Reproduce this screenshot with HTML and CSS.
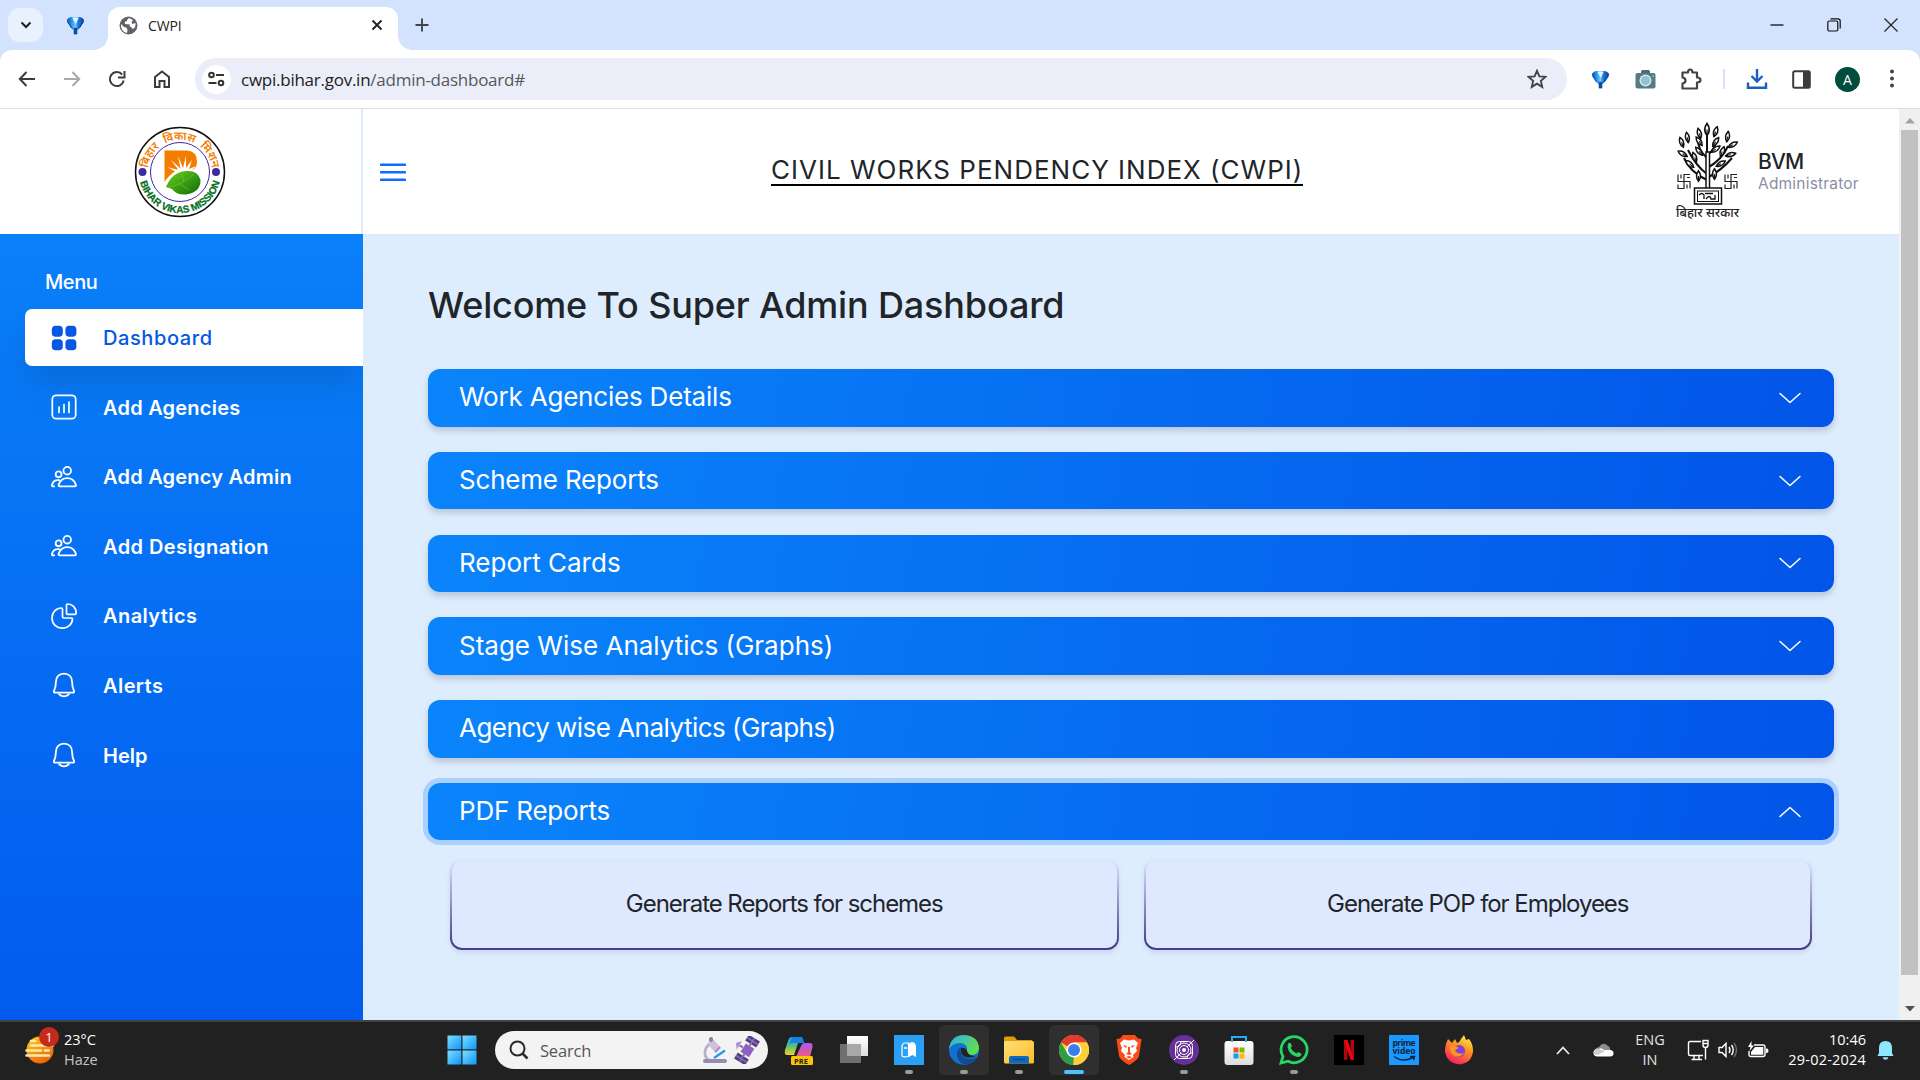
FILE: index.html
```html
<!DOCTYPE html>
<html lang="en">
<head>
<meta charset="utf-8">
<title>CWPI</title>
<link rel="stylesheet" href="styles.css">
</head>
<body>
<svg class="defs" width="0" height="0" aria-hidden="true">
  <defs>
    <linearGradient id="gem" x1="0" x2="1"><stop offset="0" stop-color="#0a4da8"/><stop offset=".3" stop-color="#2a9df4"/><stop offset=".5" stop-color="#7cc8fb"/><stop offset=".65" stop-color="#1c7be0"/><stop offset="1" stop-color="#0b3f96"/></linearGradient>
    <linearGradient id="win" x1="0" y1="0" x2="1" y2="1"><stop offset="0" stop-color="#7fe0ff"/><stop offset="1" stop-color="#0a94fb"/></linearGradient>
    <linearGradient id="sun" x1="0" y1="0" x2=".6" y2="1"><stop offset="0" stop-color="#ffd21a"/><stop offset="1" stop-color="#e8640c"/></linearGradient>
    <linearGradient id="leaf" x1="0" y1="0" x2="1" y2="1"><stop offset="0" stop-color="#6fd41a"/><stop offset="1" stop-color="#0b6a0b"/></linearGradient>
    <linearGradient id="cop1" x1="0" y1="0" x2="0" y2="1"><stop offset="0" stop-color="#18a5ee"/><stop offset=".5" stop-color="#5ac07a"/><stop offset="1" stop-color="#f3d21d"/></linearGradient>
    <linearGradient id="cop2" x1="0" y1="0" x2="0" y2="1"><stop offset="0" stop-color="#a35bf0"/><stop offset="1" stop-color="#f75a7d"/></linearGradient>
    <linearGradient id="edge1" x1="0" y1="0" x2="1" y2=".5"><stop offset="0" stop-color="#2bb0f0"/><stop offset="1" stop-color="#62dc50"/></linearGradient>
    <linearGradient id="fold" x1="0" y1="0" x2="1" y2="1"><stop offset="0" stop-color="#ffe07a"/><stop offset="1" stop-color="#fdbb24"/></linearGradient>
    <linearGradient id="fox" x1=".8" y1="0" x2=".3" y2="1"><stop offset="0" stop-color="#fff24a"/><stop offset=".45" stop-color="#ff8a1f"/><stop offset="1" stop-color="#f5186a"/></linearGradient>
    <linearGradient id="paper" x1="0" y1="0" x2="0" y2="1"><stop offset="0" stop-color="#fff"/><stop offset="1" stop-color="#dcdcdc"/></linearGradient>
    <symbol id="gemIcon" viewBox="0 0 20 20"><path d="M1 4.500 Q3 1.500 5.500 1.500 H14.500 Q17 1.500 19 4.500 L18.500 7.500 L11.800 15.500 V19.800 H8.200 V15.500 L1.500 7.500Z" fill="url(#gem)"/><path d="M6.500 2 H13.500 L10.300 9Z" fill="#e2f4ff"/><path d="M1 5L8.200 15.500L4.500 12Z M19 5L11.800 15.500L15.500 12Z" fill="#083b8c"/><path d="M8.200 13H11.800V19.800H8.200Z" fill="#0f4c9e"/></symbol>
    <symbol id="people" viewBox="0 0 24 24"><g fill="none" stroke="currentColor" stroke-width="1.700" stroke-linecap="round" stroke-linejoin="round"><circle cx="15" cy="6.200" r="3.500"/><circle cx="7" cy="9.500" r="2.700"/><path d="M8.200 20.600 H21.800 Q23.500 20.600 22.800 18.700 C21.500 15 18.500 13 15 13 C11.500 13 8.500 15 7.200 18.700 Q6.500 20.600 8.200 20.600Z"/><path d="M3 20.600 H1.800 Q.700 20.600 1 19.200 C1.800 16 4.200 14.500 7.500 14.900"/></g></symbol>
    <symbol id="bell" viewBox="0 0 24 24"><g fill="none" stroke="currentColor" stroke-width="1.700" stroke-linecap="round" stroke-linejoin="round"><path d="M4.500 9.500 C4.500 4.500 7.500 1.500 12 1.500 C16.500 1.500 19.500 4.500 19.500 9.500 C19.500 13 20 15 21.200 17.300 Q21.800 19 20 19 H4 Q2.200 19 2.800 17.300 C4 15 4.500 13 4.500 9.500Z"/><path d="M7.500 20.500 Q12 24.500 16.500 20.500"/></g></symbol>
    <symbol id="chev" viewBox="0 0 24 24"><path d="M2 7.500 L12 16.500 L22 7.500" fill="none" stroke="#fff" stroke-width="1.600" stroke-linecap="round" stroke-linejoin="round"/></symbol>
    <symbol id="twig" viewBox="0 0 8 14"><path d="M4 13 Q-.5 7 4 1 Q8.500 7 4 13Z" fill="#fff" stroke="#111" stroke-width="1.700"/><path d="M4 13V7" stroke="#111" stroke-width="1.200"/></symbol>
    <symbol id="meander" viewBox="0 0 14 16"><path d="M1 1 V8 H13 V15 M13 1 H7 V15 H1 V11 M4 1 V5 M10 11 V15 M10 4 H13" fill="none" stroke="#222" stroke-width="1.200"/></symbol>
  </defs>
</svg>

<div class="tabstrip">
  <div class="tab-search"><svg width="12" height="12" viewBox="0 0 12 12"><path d="M1.500 3.500 L6 8 L10.500 3.500" fill="none" stroke="#1f1f1f" stroke-width="2"/></svg></div>
  <svg class="pinned" width="19" height="20"><use href="#gemIcon"/></svg>
  <div class="tab">
    <svg width="19" height="19" viewBox="0 0 19 19"><circle cx="9.500" cy="9.500" r="9" fill="#5f6368"/><path d="M2 8 L5 11 Q8 11 8.500 14 L8 17 Q3 16 2 11Z M10 2 Q8 3 8 5 Q5 5 6 8 L11 8.500 Q10 11 12 11 L14 13 Q17 11 16.500 7 L13 8 Q12 6 14 4Z" fill="#fff"/></svg>
    <span class="tab-title">CWPI</span>
    <svg class="tab-close" width="12" height="12" viewBox="0 0 12 12"><path d="M1.500 1.500 L10.500 10.500 M10.500 1.500 L1.500 10.500" stroke="#222" stroke-width="1.900"/></svg>
  </div>
  <svg class="newtab" width="14" height="14" viewBox="0 0 14 14"><path d="M7 .5V13.500M.5 7H13.500" stroke="#444" stroke-width="1.900"/></svg>
  <div class="winctl">
    <svg width="14" height="14" viewBox="0 0 14 14"><path d="M.5 7H13.500" stroke="#000" stroke-width="1.200"/></svg>
    <svg width="14" height="14" viewBox="0 0 14 14"><rect x=".8" y="3" width="10" height="10" rx="1.500" fill="none" stroke="#111" stroke-width="1.200"/><path d="M3.500 .8 H11 Q13.200 .8 13.200 3 V10.500" fill="none" stroke="#111" stroke-width="1.200"/></svg>
    <svg width="14" height="14" viewBox="0 0 14 14"><path d="M.5 .5 L13.500 13.500 M13.500 .5 L.5 13.500" stroke="#222" stroke-width="1.200"/></svg>
  </div>
</div>

<div class="toolbar">
  <div class="nav">
    <svg width="18" height="18" viewBox="0 0 18 18"><path d="M17 9H2M8.500 2L1.800 9L8.500 16" fill="none" stroke="#3c3c3c" stroke-width="2"/></svg>
    <svg width="18" height="18" viewBox="0 0 18 18"><path d="M1 9H16M9.500 2L16.200 9L9.500 16" fill="none" stroke="#a9a9a9" stroke-width="2"/></svg>
    <svg width="18" height="18" viewBox="0 0 18 18"><path d="M15.700 10.500 A7 7 0 1 1 14.200 4.500" fill="none" stroke="#3c3c3c" stroke-width="2"/><path d="M16.500 1V7.500H10" fill="none" stroke="#3c3c3c" stroke-width="2"/></svg>
    <svg width="18" height="18" viewBox="0 0 18 18"><path d="M2 7 L9 1.500 L16 7 V17 H11.500 V11 H6.500 V17 H2Z" fill="none" stroke="#3c3c3c" stroke-width="2"/></svg>
  </div>
  <div class="omnibox">
    <div class="site"><svg width="17" height="16" viewBox="0 0 17 16"><g fill="none" stroke="#333" stroke-width="2"><circle cx="3.500" cy="4" r="2.300"/><path d="M8 4H16"/><circle cx="13" cy="12" r="2.300"/><path d="M.5 12H8.500"/></g></svg></div>
    <span class="url">cwpi.bihar.gov.in<span>/admin-dashboard#</span></span>
    <svg class="star" width="20" height="20" viewBox="0 0 20 20"><path d="M10 1.800 L12.400 7.400 L18.400 7.900 L13.900 11.900 L15.200 17.900 L10 14.700 L4.800 17.900 L6.100 11.900 L1.600 7.900 L7.600 7.400Z" fill="none" stroke="#444" stroke-width="1.900"/></svg>
  </div>
  <div class="ext">
    <svg width="19" height="20"><use href="#gemIcon"/></svg>
    <svg class="e-cam" width="21" height="19" viewBox="0 0 21 19"><rect x="6" y="0" width="9" height="6" rx="1.500" fill="#4c6b76"/><rect x=".5" y="3" width="20" height="15.500" rx="2" fill="#557a86"/><circle cx="10.500" cy="10.500" r="6" fill="#d5e6e9"/><circle cx="10.500" cy="10.500" r="4.500" fill="#92c2cc"/><circle cx="18" cy="6" r="1" fill="#3dddb4"/></svg>
    <svg class="e-puz" width="22" height="22" viewBox="0 0 22 22"><path d="M2.500 4.500 H8 Q8 1.500 10.200 1.500 Q12.400 1.500 12.400 4.500 H17 V9.500 Q20.500 9.500 20.500 12 Q20.500 14.500 17 14.500 V20.500 H2.500 V15.500 Q5.500 15 5.500 12.500 Q5.500 10 2.500 9.500Z" fill="none" stroke="#444" stroke-width="2.200" stroke-linejoin="round"/></svg>
    <i class="sep"></i>
    <svg class="e-dl" width="22" height="22" viewBox="0 0 22 22"><path d="M11 1V13M5.500 8L11 13.500L16.500 8M2 14.500V19.800H20V14.500" fill="none" stroke="#1a5fc4" stroke-width="2.400"/></svg>
    <svg class="e-panel" width="19" height="19" viewBox="0 0 19 19"><rect x="1.200" y="1.200" width="16.600" height="16.600" rx="1.500" fill="none" stroke="#3c3c3c" stroke-width="2"/><rect x="11" y="1" width="7" height="17" fill="#3c3c3c"/></svg>
    <span class="avatar">A</span>
    <svg class="e-dots" width="6" height="20" viewBox="0 0 6 20"><g fill="#444"><circle cx="3" cy="2.500" r="2"/><circle cx="3" cy="9.500" r="2"/><circle cx="3" cy="16.500" r="2"/></g></svg>
  </div>
</div>

<div class="page">
  <aside class="side">
    <div class="brand">
      <svg width="92" height="92" viewBox="0 0 92 92">
        <defs><path id="arcTop" d="M18 62 A32.200 32.200 0 1 1 74 62"/><path id="arcBot" d="M5 46 A41 41 0 0 0 87 46"/></defs>
        <circle cx="46" cy="46" r="44.500" fill="#fff" stroke="#111" stroke-width="1.500"/>
        <circle cx="46" cy="46" r="29.500" fill="#fff" stroke="#3c2aa0" stroke-width="1"/>
        <text class="logo-hi"><textPath href="#arcTop" startOffset="50%" text-anchor="middle">बिहार विकास मिशन</textPath></text>
        <text class="logo-en"><textPath href="#arcBot" startOffset="50%" text-anchor="middle">BIHAR VIKAS MISSION</textPath></text>
        <circle cx="8.500" cy="46" r="4" fill="#3c2aa0"/><circle cx="82" cy="46" r="4" fill="#3c2aa0"/>
        <path d="M30.500 24.500 H53 Q63 25 63 36 Q63 42 58 44 L44 43 Q34 50 30.500 56Z" fill="#f27d00"/>
        <path d="M48 49 L33 41 L44.500 44 L37 34 L46.500 42.500 L44 30 L49 42 L52 30 L52 42 L58 34 L55 43 L62 40 L56 46Z" fill="#fff"/>
        <path d="M32 61 Q38 46 52 45 Q64 44 66.500 54 Q67 66 52 68.500 Q42 69 38 63Z" fill="url(#leaf)"/>
        <path d="M34 61 Q46 60 60 48 M46 58 L55 64 M50 55 L48 48" fill="none" stroke="#7cc832" stroke-width=".6"/>
      </svg>
    </div>
    <nav class="menu">
      <div class="menu-title">Menu</div>
      <a class="item active"><svg width="26" height="26" viewBox="0 0 26 26" fill="#0657e6"><rect x=".8" y=".8" width="11" height="11" rx="3.800"/><rect x="14.400" y=".8" width="11" height="11" rx="3.800"/><rect x=".8" y="14.300" width="11" height="11" rx="3.800"/><rect x="14.400" y="14.300" width="11" height="11" rx="3.800"/></svg><span class="w-dash">Dashboard</span></a>
      <a class="item"><svg width="26" height="26" viewBox="0 0 26 26"><rect x="1.300" y="1.300" width="23.400" height="23.400" rx="4" fill="none" stroke="#fff" stroke-width="1.700"/><path d="M8 13V18.500M13 10.500V18.500M18 8V18.500" stroke="#fff" stroke-width="1.700" stroke-linecap="round"/></svg><span class="w-mid">Add Agencies</span></a>
      <a class="item"><svg width="26" height="26"><use href="#people"/></svg><span class="w-mid">Add Agency Admin</span></a>
      <a class="item"><svg width="26" height="26"><use href="#people"/></svg><span class="w-wide">Add Designation</span></a>
      <a class="item"><svg width="26" height="26" viewBox="0 0 26 26"><g fill="none" stroke="#fff" stroke-width="1.700" stroke-linejoin="round"><path d="M10.500 5 C5 5 1 9.500 1 15 C1 21 5.500 25.200 11.500 25.200 C17 25.200 21.500 21 21.500 15.800 Q21.500 15 20.500 15 H13 Q11.500 15 11.500 13.500 V6 Q11.500 5 10.500 5Z"/><path d="M15.500 2.200 Q15.500 1 16.700 1 C21.500 1 25.200 5 25.200 10 Q25.200 11.300 24 11.300 H16.500 Q15.500 11.300 15.500 10.200Z"/></g></svg><span class="w-wide">Analytics</span></a>
      <a class="item"><svg width="26" height="26"><use href="#bell"/></svg><span class="w-wide">Alerts</span></a>
      <a class="item"><svg width="26" height="26"><use href="#bell"/></svg><span>Help</span></a>
    </nav>
  </aside>

  <div class="content">
    <header class="header">
      <svg class="burger" width="26" height="19" viewBox="0 0 26 19"><path d="M1 1.800H25M1 9.300H25M1 16.800H25" stroke="#0d6efd" stroke-width="2.500" stroke-linecap="round"/></svg>
      <h1><span>CIVIL WORKS PENDENCY INDEX (CWPI)</span></h1>
      <div class="user">
        <svg class="emblem" width="66" height="98" viewBox="0 0 66 98">
          <path d="M31 66 V10 M31 52 Q20 44 12 28 M31 46 Q46 38 52 24 M31 58 Q14 50 8 36 M31 56 Q46 48 56 36 M31 36 Q22 28 22 18 M31 34 Q40 26 41 16" fill="none" stroke="#111" stroke-width="2"/>
          <path d="M30 66V30H33.500V66" fill="#fff" stroke="#111" stroke-width="1.500"/>
          <g>
            <use href="#twig" x="27" y="0" width="8" height="15"/>
            <use href="#twig" x="20" y="5" width="7" height="13" transform="rotate(-15 23 12)"/><use href="#twig" x="36" y="3" width="7" height="13" transform="rotate(18 39 10)"/>
            <use href="#twig" x="20" y="13" width="7" height="13" transform="rotate(-35 23 20)"/><use href="#twig" x="36" y="13" width="7" height="13" transform="rotate(35 39 20)"/>
            <use href="#twig" x="8" y="9" width="7" height="13" transform="rotate(-10 11 16)"/><use href="#twig" x="48" y="8" width="7" height="13" transform="rotate(8 51 15)"/>
            <use href="#twig" x="2" y="14" width="7" height="13" transform="rotate(-20 5 20)"/><use href="#twig" x="54" y="16" width="7" height="13" transform="rotate(60 57 22)"/>
            <use href="#twig" x="3" y="26" width="7" height="13" transform="rotate(-60 6 32)"/><use href="#twig" x="52" y="26" width="7" height="13" transform="rotate(75 55 32)"/>
            <use href="#twig" x="15" y="29" width="7" height="13" transform="rotate(-20 18 35)"/><use href="#twig" x="43" y="23" width="7" height="13" transform="rotate(20 46 29)"/>
            <use href="#twig" x="20" y="23" width="7" height="13" transform="rotate(-40 23 30)"/><use href="#twig" x="36" y="20" width="7" height="13" transform="rotate(55 39 27)"/>
            <use href="#twig" x="10" y="36" width="7" height="13" transform="rotate(-50 13 42)"/><use href="#twig" x="42" y="35" width="7" height="13" transform="rotate(60 45 41)"/>
            <use href="#twig" x="19" y="47" width="7" height="14"/><use href="#twig" x="35" y="45" width="7" height="14"/>
          </g>
          <use href="#meander" x="1" y="51" width="14" height="17"/><use href="#meander" x="48" y="51" width="14" height="17"/>
          <rect x="18.500" y="66" width="27" height="16" fill="#fff" stroke="#111" stroke-width="1.500"/><rect x="21.500" y="69" width="21" height="10.500" fill="none" stroke="#111"/><path d="M23 73 Q26 70 28 73 V77 M29 71.500H37M30 77Q34 72 35 77H39V73" fill="none" stroke="#111" stroke-width="1.300"/>
          <text class="emblem-text" x="0" y="95" textLength="63" lengthAdjust="spacingAndGlyphs">बिहार सरकार</text>
        </svg>
        <div class="who"><b>BVM</b><span>Administrator</span></div>
      </div>
    </header>
    <main class="main">
      <h2>Welcome To Super Admin Dashboard</h2>
      <div class="acc"><span class="t-tight">Work Agencies Details</span><svg width="24" height="24"><use href="#chev"/></svg></div>
      <div class="acc"><span class="t-tight">Scheme Reports</span><svg width="24" height="24"><use href="#chev"/></svg></div>
      <div class="acc"><span>Report Cards</span><svg width="24" height="24"><use href="#chev"/></svg></div>
      <div class="acc"><span>Stage Wise Analytics (Graphs)</span><svg width="24" height="24"><use href="#chev"/></svg></div>
      <div class="acc"><span class="t-tighter">Agency wise Analytics (Graphs)</span></div>
      <div class="acc open"><span class="t-tight">PDF Reports</span><svg width="24" height="24"><use href="#chev"/></svg></div>
      <div class="cards">
        <div class="card"><span>Generate Reports for schemes</span></div>
        <div class="card"><span>Generate POP for Employees</span></div>
      </div>
    </main>
  </div>

  <div class="scroll">
    <svg width="10" height="6" viewBox="0 0 10 6"><path d="M5 0L10 5.500H0Z" fill="#a3a3a3"/></svg>
    <div class="thumb"></div>
    <svg width="10" height="6" viewBox="0 0 10 6"><path d="M5 5.500L10 0H0Z" fill="#505050"/></svg>
  </div>
</div>

<div class="taskbar">
  <div class="weather">
    <div class="sun"><svg width="34" height="30" viewBox="0 0 34 30"><circle cx="15" cy="15" r="13.500" fill="url(#sun)"/><g stroke="#ffe9a8" stroke-width="2.600" stroke-linecap="round"><path d="M6 6H10M6 10.500H28M1.500 15.500H16M20 15.500H24M1.500 20.500H24"/></g></svg><span class="badge">1</span></div>
    <div class="wtext"><span>23°C</span><span>Haze</span></div>
  </div>
  <div class="slot"><svg width="30" height="30" viewBox="0 0 30 30" fill="url(#win)"><path d="M.5 .5H14.300V14.300H.5Z"/><path d="M15.500 .5H29.500V14.300H15.500Z"/><path d="M.5 15.500H14.300V29.500H.5Z"/><path d="M15.500 15.500H29.500V29.500H15.500Z"/></svg></div>
  <div class="search">
    <svg width="20" height="20" viewBox="0 0 20 20"><circle cx="8.500" cy="8.500" r="7" fill="none" stroke="#2a2a2a" stroke-width="2"/><path d="M13.500 13.500L18.500 18.500" stroke="#2a2a2a" stroke-width="2.500"/></svg>
    <span>Search</span>
    <svg class="scope" width="26" height="28" viewBox="0 0 26 28"><path d="M8 8 Q3 11 3 17 Q3 22 7 24" fill="none" stroke="#b9afc8" stroke-width="2.800"/><path d="M6 6L12 4L19 12L14 17L9 12Z" fill="#d0c2de"/><path d="M13 16L18 11" stroke="#a98bd0" stroke-width="2"/><rect x="7" y="1" width="4" height="5" rx="2" fill="#8a8590"/><path d="M12 22L23 14.500" stroke="#1c9cf0" stroke-width="2.200"/><rect x="1" y="23" width="24" height="4" rx="2" fill="#9b8ab0"/></svg>
    <svg width="26" height="28" viewBox="0 0 26 28"><g transform="rotate(32 13 14)"><rect x="6.500" y="0" width="13" height="7" fill="#54436f"/><rect x="6.500" y="21" width="13" height="7" fill="#54436f"/><rect x="8.500" y="9" width="10" height="10" fill="#8d62c4"/><path d="M13 7V9M13 19V21M8 14H4" stroke="#777" stroke-width="2"/><path d="M4 9V19L0 14Z" fill="#a98be0"/><path d="M6.500 3.500H19.500M6.500 24.500H19.500M13 0V7M13 21V28" stroke="#8f68d8" stroke-width="1.500"/></g></svg>
  </div>
  <div class="apps">
    <div class="slot"><svg width="30" height="30" viewBox="0 0 30 30"><path d="M8 2H18L20 8H14L10 20H3Q0 20 1 15L4 6Q5 2 8 2Z" fill="url(#cop1)"/><path d="M8 2H18L20 8H8Q6 8 5 10Z" fill="#1482e6"/><path d="M20 8H26Q29 8 28.500 12L26 22H12L17 11Q18 8 20 8Z" fill="url(#cop2)"/><rect x="7" y="21" width="22" height="9" rx="1.500" fill="#ffc400"/><text class="pre" x="10" y="28.500">PRE</text></svg></div>
    <div class="slot"><svg width="30" height="30" viewBox="0 0 30 30"><rect x="1" y="9" width="21" height="19" fill="#707070"/><rect x="8" y="1" width="21" height="20" fill="url(#paper)"/><rect x="8" y="9" width="14" height="12" fill="#a8a8a8"/></svg></div>
    <div class="slot run"><svg width="30" height="30" viewBox="0 0 30 30"><rect width="30" height="30" fill="#2b9ff3"/><path d="M8 21V12Q8 8 11.500 8H14.500V21.500Q10 22.500 8 21Z" fill="none" stroke="#fff" stroke-width="1.200"/><path d="M10 13H13" stroke="#fff" stroke-width="1.500"/><path d="M14.500 22V10Q15.500 7 18.500 7Q22 8 22 12V22L18.500 20Z" fill="#fff"/></svg></div>
    <div class="slot run lit"><svg width="30" height="30" viewBox="0 0 30 30"><circle cx="15" cy="15" r="15" fill="#0f72cf"/><path d="M0 14Q2 0 15 0Q30 1 30 14Q29 20 22 20Q17 20 18 16Q19 9 12 8Q4 7 0 14Z" fill="url(#edge1)"/><path d="M28 22Q20 26 15 22Q10 18 12 12Q7 15 8 21Q10 29 17 30Q24 30 28 22Z" fill="#124a94"/><path d="M18 16Q16 12 12 13Q11 18 15 21Q19 24 27 21Q19 21 18 16Z" fill="#222"/></svg></div>
    <div class="slot run"><svg width="30" height="28" viewBox="0 0 30 28"><path d="M0 2Q0 .5 1.500 .5H10L13 4H28V10H0Z" fill="#dd9d05"/><rect y="5" width="30" height="22.500" rx="1.500" fill="url(#fold)"/><path d="M5 27.500V22Q5 20 7 20H23Q25 20 25 22V27.500Z" fill="#0e6bc0"/><path d="M9 23.500H21" stroke="#064a8c" stroke-width="1.500"/></svg></div>
    <div class="slot run lit current"><svg width="30" height="30" viewBox="0 0 30 30"><circle cx="15" cy="15" r="15" fill="#fdd03b"/><path d="M15 15L2 7.500A15 15 0 0 1 28 7.500H15Z" fill="#e33b2e"/><path d="M2 7.500L8.500 18.750L15 22.500L14 30A15 15 0 0 1 2 7.500Z" fill="#2d9d48"/><path d="M21.500 18.750L14 30A15 15 0 0 0 28 7.500H15Z" fill="#fdd03b"/><circle cx="15" cy="15" r="7.500" fill="#fff"/><circle cx="15" cy="15" r="6" fill="#3b7ded"/></svg></div>
    <div class="slot"><svg width="26" height="30" viewBox="0 0 26 30"><path d="M7 0H19L22 3.500L25.500 4L25 8L23 21Q22 25 13 30Q4 25 3 21L1 8L.500 4L4 3.500Z" fill="#fb4a16"/><path d="M8 4.500L13 5.500L18 4.500L22 8L20 13L21 16L17 20L17.500 22L13 25L8.500 22L9 20L5 16L6 13L4 8Z" fill="#fff"/><path d="M7 10L11 11L10 13ZM19 10L15 11L16 13ZM12 12V17L10 19L13 20L16 19L14 17V12ZM10 22L13 21L16 22L13 23.500Z" fill="#fb4a16"/></svg></div>
    <div class="slot run"><svg width="30" height="30" viewBox="0 0 30 30"><circle cx="15" cy="15" r="15" fill="#663096"/><g fill="none" stroke="#fff" stroke-width="1"><rect x="6.500" y="6.500" width="17" height="17" rx="4"/><circle cx="15" cy="15" r="7"/><circle cx="15" cy="15" r="4.500"/><path d="M5 25L12 18M18 12L25 5M6.500 12Q12 12 12 6.500M23.500 18Q18 18 18 23.500"/></g><circle cx="15" cy="15" r="2" fill="#fff"/></svg></div>
    <div class="slot"><svg width="30" height="30" viewBox="0 0 30 30"><rect x=".5" y="6" width="29" height="24" rx="3" fill="url(#paper)"/><path d="M8 7V2H22V7" fill="none" stroke="#27aef2" stroke-width="2"/><path d="M9.500 12.500H14.500V17.500H9.500Z" fill="#f25022"/><path d="M15.500 12.500H20.500V17.500H15.500Z" fill="#7fba00"/><path d="M9.500 18.500H14.500V23.500H9.500Z" fill="#00a4ef"/><path d="M15.500 18.500H20.500V23.500H15.500Z" fill="#ffb900"/></svg></div>
    <div class="slot run"><svg width="30" height="30" viewBox="0 0 30 30"><path d="M2 28L4 21.500A13 13 0 1 1 9 26.200Z" fill="#202020" stroke="#27d466" stroke-width="2.800"/><path d="M9 9Q10 7 11.500 8L13 11L11.800 13Q13.500 17 17.500 18.500L19 17L22.500 18.800Q22 22 18.500 22Q10 20 8.500 12Z" fill="#27d466"/></svg></div>
    <div class="slot"><svg width="30" height="30" viewBox="0 0 30 30"><rect width="30" height="30" fill="#000"/><path d="M10 5H13.500V24.500L10 25ZM16.500 5H20V25L16.500 24.500Z" fill="#b1060f"/><path d="M10 5H13.500L20 25L16.500 24.500Z" fill="#e50914"/></svg></div>
    <div class="slot"><svg width="30" height="30" viewBox="0 0 30 30"><rect width="30" height="30" fill="#1a98ff"/><text class="prime" x="3.500" y="10.500" textLength="23">prime</text><text class="prime" x="3.500" y="19" textLength="23">video</text><path d="M5 21.500Q14 28 24 22.500M21 21.500L25.500 21.500L24.500 25" fill="none" stroke="#0b2540" stroke-width="1.500"/></svg></div>
    <div class="slot"><svg width="30" height="30" viewBox="0 0 30 30"><path d="M2 9L4 4L8 8L11 4L13 8Q16 7 17 4L20 0L22 5L25 4Q29 9 29 16Q28 28 15 29.500Q3 28 1 17Q1 12 2 9Z" fill="url(#fox)"/><circle cx="15" cy="16" r="6" fill="#8040e0"/><path d="M5 12Q10 9 15 13L11 15Q13 20 20 18Q15 24 9 20Q6 17 5 12Z" fill="#ff9426"/></svg></div>
  </div>
  <div class="tray">
    <div class="s40"><svg width="14" height="9" viewBox="0 0 14 9"><path d="M1 8L7 1.500L13 8" fill="none" stroke="#eee" stroke-width="1.700"/></svg></div>
    <div class="s40"><svg width="21" height="14" viewBox="0 0 21 14"><path d="M4 10Q1 5 6 4Q10-2 15 3Q18 4 17 9Z" fill="#8d8d8d"/><path d="M4 13.500Q0 13 .5 9Q2 5 6 6Q8 4 11 7L18 7Q21 8 20.500 11Q20 13.500 17 13.500Z" fill="#fff"/><path d="M.5 9Q2 5 6 6L12 8L5 12Q1 12 .500 9Z" fill="#ccc"/></svg></div>
    <div class="lang"><span>ENG</span><span>IN</span></div>
    <div class="s42"><svg width="22" height="22" viewBox="0 0 22 22"><g fill="none" stroke="#fff" stroke-width="1.400"><path d="M14 2.500H3Q1.500 2.500 1.500 4V15Q1.500 16.500 3 16.500H16M7 17V20M12 17V20M4.500 20.500H15M18.500 9V20.500"/><path d="M16 1.500H21V6Q21 8.500 18.500 8.500Q16 8.500 16 6ZM16 4.500H21"/></g></svg></div>
    <div class="s18"><svg width="20" height="18" viewBox="0 0 20 18"><g fill="none" stroke="#fff" stroke-width="1.400"><path d="M1 6.500H4L8 2.500V15.500L4 11.500H1Z"/><path d="M11 6Q13 9 11 12M13.500 4Q17 9 13.500 14"/><path d="M16 2Q21 9 16 16" stroke="#6d6d6d"/></g></svg></div>
    <div class="s42"><svg width="22" height="18" viewBox="0 0 22 18"><path d="M7 4H16Q18 4 18 6V13.500Q18 15.500 16 15.500H4Q2 15.500 2 13.500V10" fill="none" stroke="#fff" stroke-width="1.400"/><path d="M8 6H16.300V13.700H4V11Z M19 7.500H20Q21.500 8 21.500 9.800Q21.500 11.500 20 12H19Z M4.500 0L1 6H3.500L2.500 10L7 4.500H4.500Z" fill="#fff"/></svg></div>
    <div class="clock"><span>10:46</span><span class="date">29-02-2024</span></div>
    <div class="s38"><svg width="17" height="20" viewBox="0 0 17 20"><path d="M2 8Q2 1 8.500 1Q15 1 15 8V13L16.500 16H.5L2 13ZM5.500 17.200H11.500Q10.500 19.800 8.500 19.800Q6.500 19.800 5.500 17.200Z" fill="#8fe6ff"/></svg></div>
  </div>
</div>
</body>
</html>
```
FILE: styles.css
```css
* { box-sizing: border-box; }
body {
  margin: 0;
  width: 1920px;
  height: 1080px;
  overflow: hidden;
  display: flex;
  flex-direction: column;
  font-family: "Inter", "Noto Sans", sans-serif;
  color: #212529;
  background: #fff;
}
svg { display: block; flex: none; }
.defs { position: absolute; }

/* Browser tab strip */
.tabstrip {
  height: 50px;
  flex: none;
  background: #d3e2fd;
  display: flex;
  align-items: center;
  padding-left: 8px;
  font-family: "Open Sans", "Noto Sans", sans-serif;
}
.tab-search {
  width: 35px;
  height: 34px;
  border-radius: 12px;
  background: #e9f1fe;
  display: grid;
  place-items: center;
}
.pinned { margin: 0 23px; }
.tab {
  position: relative;
  align-self: flex-end;
  width: 290px;
  height: 43px;
  border-radius: 12px 12px 0 0;
  background: #fff;
  display: flex;
  align-items: center;
  padding: 0 15px 7px 11px;
}
.tab::before, .tab::after {
  content: "";
  position: absolute;
  bottom: 0;
  width: 14px;
  height: 14px;
}
.tab::before { left: -14px; background: radial-gradient(circle at 0 0, transparent 13.5px, #fff 14px); }
.tab::after { right: -14px; background: radial-gradient(circle at 100% 0, transparent 13.5px, #fff 14px); }
.tab-title { margin-left: 10px; font-size: 14px; letter-spacing: -.1px; color: #222; }
.tab-close { margin-left: auto; }
.newtab { margin-left: 17px; }
.winctl { margin-left: auto; margin-right: 22px; display: flex; gap: 43px; }

/* Browser toolbar */
.toolbar {
  height: 59px;
  flex: none;
  display: flex;
  align-items: center;
  padding: 0 25px 0 18px;
  border-bottom: 1px solid #dedede;
  background: #fff;
  box-shadow: 0 -12px 0 #d3e2fd;
  border-radius: 12px 12px 0 0;
  clip-path: inset(0);
  font-family: "Open Sans", "Noto Sans", sans-serif;
}
.nav { display: flex; gap: 27px; width: 177px; }
.omnibox {
  width: 1372px;
  height: 42px;
  border-radius: 21px;
  background: #ebeef8;
  display: flex;
  align-items: center;
  padding: 0 20px 0 7px;
}
.site {
  width: 29px;
  height: 29px;
  border-radius: 50%;
  background: #fff;
  display: grid;
  place-items: center;
}
.url { margin-left: 10px; font-size: 17px; letter-spacing: -.25px; color: #202124; }
.url span { color: #55585d; }
.star { margin-left: auto; }
.ext { flex: 1; display: flex; align-items: center; padding-left: 24px; }
.e-cam { margin-left: 25px; }
.e-puz { margin-left: 24px; }
.sep { width: 2px; height: 20px; margin: 0 21px; background: #d3e2fd; }
.e-panel { margin: 0 24px; }
.e-dots { margin-left: 29px; }
.avatar {
  width: 25px;
  height: 25px;
  border-radius: 50%;
  background: #004d40;
  color: #fff;
  font-size: 14px;
  display: grid;
  place-items: center;
}

/* Page */
.page { flex: 1; min-height: 0; display: flex; }
.side { width: 363px; flex: none; display: flex; flex-direction: column; }
.brand {
  height: 125px;
  flex: none;
  border-right: 2px solid #deedfe;
  padding: 17px 0 0 134px;
}
.logo-hi { font: 600 11.5px "Noto Sans Devanagari", "Noto Sans", sans-serif; fill: #f27d00; word-spacing: 3px; }
.logo-en { font: 700 10px "Liberation Sans Narrow", "Liberation Sans", sans-serif; fill: #067024; stroke: #067024; stroke-width: .25px; letter-spacing: -.1px; }
.menu {
  flex: 1;
  background: linear-gradient(180deg, #0a80f9, #025bee);
  padding: 35px 0 0 25px;
  overflow: hidden;
}
.menu-title { height: 40px; line-height: 26px; padding-left: 20px; font-size: 20px; font-weight: 500; letter-spacing: -.4px; color: #fff; }
.item {
  height: 57px;
  margin-bottom: 12.600px;
  display: flex;
  align-items: center;
  gap: 26px;
  padding-left: 26px;
  color: #fff;
  font-size: 20px;
  font-weight: 600;
}
.item:not(.active) span { padding-top: 1px; }
.item.active {
  background: #fff;
  color: #0657e6;
  font-weight: 500;
  border-radius: 7px 0 0 7px;
  box-shadow: 0 20px 30px rgba(8, 80, 160, .3);
}
.w-dash { letter-spacing: .6px; }
.w-mid { letter-spacing: .22px; }
.w-wide { letter-spacing: .42px; }
.content { flex: 1; min-width: 0; display: flex; flex-direction: column; background: #deedfe; }
.header {
  height: 125px;
  flex: none;
  background: #fff;
  display: flex;
  align-items: center;
  padding: 0 38px 0 17px;
}
.burger { margin-top: 1px; }
.header h1 { margin: 0 0 3px 365px; width: 905px; font-size: 26px; font-weight: 400; line-height: 30px; letter-spacing: 1px; white-space: nowrap; }
.header h1 span { display: inline-block; border-bottom: 2px solid #000; line-height: 28px; }
.user { display: flex; align-items: center; gap: 16px; }
.emblem { overflow: visible; margin-bottom: 2px; }
.who { display: flex; flex-direction: column; }
.who b { font-size: 21px; font-weight: 500; line-height: 24px; letter-spacing: -.9px; }
.who span { font-size: 15.500px; line-height: 20px; letter-spacing: .2px; color: #8a8fa3; }
.emblem-text { font: 500 12px "Noto Sans Devanagari", "Noto Sans", sans-serif; fill: #222; }
.main { padding: 46px 65px 0; }
.main h2 { margin: 0 0 39px; font-size: 36px; font-weight: 500; line-height: 50px; letter-spacing: -.15px; white-space: nowrap; }
.acc {
  height: 57.500px;
  margin-bottom: 25.300px;
  border-radius: 12px;
  background: linear-gradient(100deg, #0a84fb, #0255e8);
  box-shadow: 0 4px 6px rgba(80, 80, 110, .25);
  color: #fff;
  font-size: 26px;
  display: flex;
  align-items: center;
  justify-content: space-between;
  padding: 0 32px 0 31px;
}
.acc span { padding-bottom: 2px; }
.t-tight { letter-spacing: -.2px; }
.t-tighter { letter-spacing: -.52px; }
.acc.open { box-shadow: 0 0 0 5px #abd0ff; margin-bottom: 18.500px; }
.acc.open svg { transform: rotate(180deg); }
.cards { display: grid; grid-template-columns: 1fr 1fr; gap: 25px; padding: 0 22px; }
.card {
  height: 91px;
  border: 2px solid transparent;
  border-radius: 12px;
  background: linear-gradient(#dee9ff, #dee9ff) padding-box, linear-gradient(180deg, #dee9fe, #483d8b 95%) border-box;
  box-shadow: 0 3px 5px rgba(70, 70, 120, .12);
  display: grid;
  place-items: center;
  font-size: 24px;
  letter-spacing: -1.05px;
}
.card span { padding-bottom: 2px; }
.scroll {
  width: 21px;
  background: #f0f0f0;
  display: flex;
  flex-direction: column;
  align-items: center;
  padding: 9px 0 8px;
  justify-content: space-between;
}
.thumb { width: 17px; height: 845px; margin-bottom: 26px; background: #c1c1c1; }

/* Windows taskbar */
.taskbar {
  height: 60px;
  flex: none;
  background: #212121;
  border-top: 2px solid #424242;
  display: flex;
  align-items: center;
  padding: 0 16px 2px 25px;
  font-family: "Open Sans", "Noto Sans", sans-serif;
  font-size: 14.500px;
  color: #fff;
}
.weather { width: 412px; display: flex; gap: 5px; }
.sun { position: relative; padding-top: 5px; }
.badge {
  position: absolute;
  left: 14px;
  top: -3px;
  width: 20px;
  height: 20px;
  border-radius: 50%;
  background: #c42b1c;
  display: grid;
  place-items: center;
  font-size: 13px;
}
.wtext, .lang, .clock { display: flex; flex-direction: column; line-height: 20px; }
.wtext span + span { color: #c5c5c5; }
.slot {
  position: relative;
  width: 50px;
  height: 50px;
  flex: none;
  border-radius: 5px;
  display: grid;
  place-items: center;
}
.slot.lit { background: #2f2f2f; }
.slot.run::after {
  content: "";
  position: absolute;
  left: 21px;
  bottom: 1px;
  width: 8px;
  height: 4px;
  border-radius: 2px;
  background: #9a9a9a;
}
.slot.current::after { left: 15px; width: 20px; background: #4cc2ff; }
.search {
  width: 273px;
  height: 38px;
  margin: 0 6px 0 8px;
  border-radius: 19px;
  background: #f3f3f3;
  display: flex;
  align-items: center;
  padding: 0 8px 0 14px;
  color: #555;
  font-size: 16.500px;
}
.search span { margin-left: 11px; letter-spacing: -.2px; }
.scope { margin: 0 6px 0 auto; }
.apps { display: flex; gap: 5px; }
.pre { font: 700 7.5px "Open Sans", sans-serif; fill: #222; }
.prime { font: 700 8.5px "Open Sans", sans-serif; fill: #0b2540; }
.tray { margin-left: auto; display: flex; align-items: center; }
.tray > div { display: flex; align-items: center; justify-content: center; }
.s18 { width: 18px; }
.s38 { width: 38px; }
.s40 { width: 40px; }
.s42 { width: 42px; }
.tray .lang { width: 54px; color: #e2e2e2; }
.tray .clock { width: 87px; align-items: flex-end; }
.date { letter-spacing: .2px; }
```
